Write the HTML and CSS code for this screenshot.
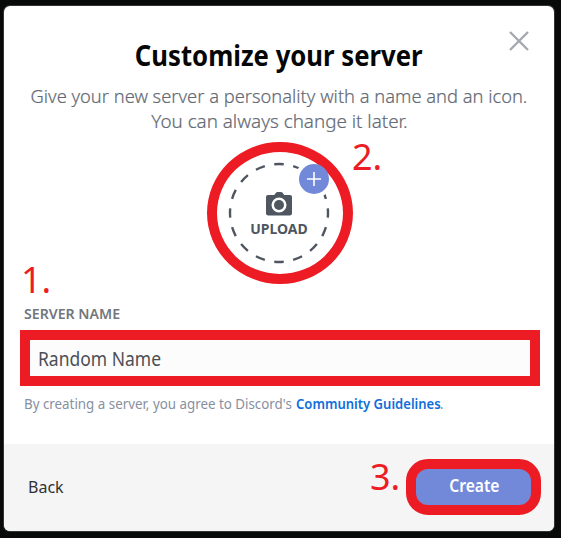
FILE: index.html
```
<!DOCTYPE html>
<html lang="en">
<head>
<meta charset="utf-8">
<title>Customize your server</title>
<link rel="stylesheet" href="styles.css">
</head>
<body>
<main class="modal">
  <section class="content">
    <svg class="close" viewBox="0 0 20 20"><path d="M1 1 19 19M19 1 1 19"/></svg>
    <h1><span class="fit title">Customize your server</span></h1>
    <p class="intro"><span class="fit line1">Give your new server a personality with a name and an icon.</span><br><span class="fit line2">You can always change it later.</span></p>
    <div class="upload">
      <svg class="dashes" viewBox="0 0 102 102"><circle cx="51" cy="51" r="49" pathLength="320"/><circle class="notch" cx="86" cy="17" r="19"/></svg>
      <svg class="camera" viewBox="0 0 26 24"><path fill-rule="evenodd" d="M8.2 3 10 .8Q10.600 0 11.600 0H15q1 0 1.600.8L18.200 3H24q2 0 2 2v16q0 2.500-2.500 2.500h-21Q0 23.500 0 21V5Q0 3 2 3ZM13 5.500a7.500 7.500 0 1 0 0 15 7.500 7.500 0 0 0 0-15Z"/><circle cx="13" cy="13" r="5"/></svg>
      <span class="upload-label"><span class="fit">UPLOAD</span></span>
      <svg class="plus" viewBox="0 0 30 30"><circle cx="15" cy="15" r="15"/><path d="M15 8v14M8 15h14"/></svg>
      <span class="step two">2.</span>
    </div>
    <div class="field">
      <span class="step one">1.</span>
      <label for="name"><span class="fit label">SERVER NAME</span></label>
      <div class="input" id="name"><span class="fit value">Random Name</span></div>
      <p class="terms"><span class="fit agree">By creating a server, you agree to Discord's</span> <span class="fit guide">Community Guidelines</span><span>.</span></p>
    </div>
  </section>
  <footer>
    <span class="back"><span class="fit">Back</span></span>
    <span class="step three">3.</span>
    <div class="create"><span class="fit action">Create</span></div>
  </footer>
</main>
</body>
</html>
```
FILE: styles.css
```
* { box-sizing: border-box; }
body {
  margin: 0;
  height: 538px;
  padding: 6px 7px 7px 4px;
  overflow: hidden;
  background: #070a09;
  font-family: "Noto Sans", "Open Sans", sans-serif;
}
.modal {
  height: 525px;
  display: flex;
  flex-direction: column;
  border-radius: 6px;
  overflow: hidden;
  background: #fff;
  box-shadow: 0 0 0 1px #333;
}
.content {
  position: relative;
  height: 438px;
  display: flex;
  flex-direction: column;
}
.close {
  position: absolute;
  left: 505px;
  top: 25px;
  width: 20px;
  height: 20px;
  fill: none;
  stroke: #a5a8ad;
  stroke-width: 2.4;
}
.fit { display: inline-block; white-space: nowrap; transform-origin: left; }
.title, .line1, .line2, .action { transform-origin: center; }
.title { transform: scaleX(.918); }
.line1 { transform: scaleX(.963); }
.line2 { transform: scaleX(.99); }
.label { transform: scaleX(1.01); }
.value { transform: scaleX(.92); }
.agree { transform: scaleX(.953); margin-right: -13px; }
.action { transform: translateX(1px) scaleX(.92); }
h1 {
  margin: 29px 0 0;
  text-align: center;
  font-size: 28px;
  line-height: 40px;
  color: #060607;
}
.intro {
  margin: 9px 0 0;
  text-align: center;
  font-size: 19px;
  line-height: 25px;
  font-weight: 300;
  -webkit-text-stroke: .2px #646a75;
  color: #646a75;
}
.upload {
  position: relative;
  margin: 8px 0 0 203px;
  width: 146px;
  height: 142px;
  flex: none;
  border: 10px solid #ed1c24;
  border-radius: 50%;
  display: flex;
  flex-direction: column;
  align-items: center;
  padding-top: 40px;
}
.dashes {
  position: absolute;
  left: 11px;
  top: 10px;
  width: 102px;
  height: 102px;
  clip-path: ellipse(62px 60px at 52px 51px);
  fill: none;
  stroke: #4f5660;
  stroke-width: 2.4;
  stroke-dasharray: 10 10;
  stroke-dashoffset: 5;
}
.notch { fill: #fff; stroke: none; }
.camera { position: relative; width: 26px; height: 24px; margin-right: 2px; fill: #4f5660; }
.upload-label {
  position: relative;
  margin-right: 2px;
  font-size: 14px;
  line-height: 26px;
  font-weight: 700;
  color: #4f5660;
}
.plus {
  position: absolute;
  left: 82px;
  top: 12px;
  width: 30px;
  height: 30px;
  fill: #7289da;
  stroke: none;
}
.plus path { stroke: #fff; stroke-width: 1.6; }
.step { font-size: 36px; line-height: 40px; color: #ed1c24; }
.two { position: absolute; left: 135px; top: -15px; }
.field {
  display: flex;
  flex-direction: column;
  padding: 0 14px 0 16px;
  margin-top: -24px;
}
.one { margin-left: 1px; }
label {
  margin: 4px 0 0 4px;
  font-size: 14px;
  line-height: 20px;
  font-weight: 600;
  color: #72767d;
}
.input {
  height: 56px;
  margin-top: 6px;
  border: 10px solid #ed1c24;
  background: #fcfcfc;
  padding-left: 8px;
  font-size: 19px;
  line-height: 38px;
  color: #4c4f55;
}
.terms {
  margin: 8px 0 0 4px;
  font-size: 14px;
  line-height: 20px;
  color: #8790a0;
}
.guide { font-weight: 600; color: #0f6edb; transform: scaleX(.932); margin-right: -11px; }
footer {
  flex: 1;
  display: flex;
  padding-left: 24px;
  background: #f5f5f5;
}
.back { width: 342px; padding-top: 31px; font-size: 16px; line-height: 24px; color: #303236; }
.three { width: 36px; padding-top: 13px; }
.create {
  width: 135px;
  height: 56px;
  margin-top: 15px;
  border: 10px solid #ed1c24;
  border-radius: 22px;
  background: #7289da;
  text-align: center;
  font-size: 17px;
  line-height: 34px;
  font-weight: 600;
  color: #fff;
}
```
